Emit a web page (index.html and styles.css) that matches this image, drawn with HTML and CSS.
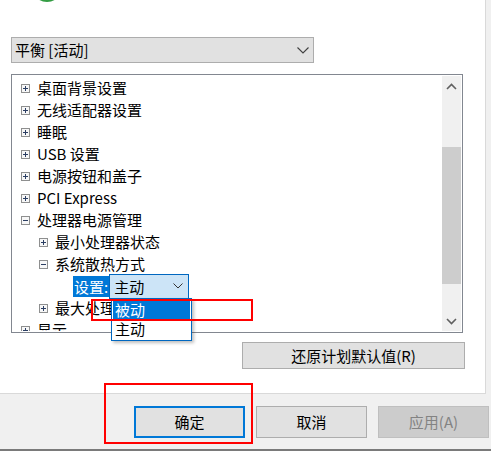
FILE: index.html
```html
<!DOCTYPE html>
<html>
<head>
<meta charset="utf-8">
<link rel="stylesheet" href="styles.css">
</head>
<body>
<div class="panel">
  <div class="header"><div class="logo"></div></div>
  <div class="select">
    <span>平衡 [活动]</span>
    <svg class="chev" width="12" height="7" viewBox="0 0 12 7"><path d="M0.5 0.5 L6 6 L11.5 0.5" fill="none" stroke="#404040" stroke-width="1.1"/></svg>
  </div>
  <div class="listbox">
    <div class="tree">
      <div class="row l1"><svg class="box" width="9" height="9" viewBox="0 0 9 9"><rect x="0.5" y="0.5" width="8" height="8" fill="#f7f7f7" stroke="#8e8f8f"/><path d="M2 4.5H7M4.5 2V7" stroke="#2b3e63"/></svg><span>桌面背景设置</span></div>
      <div class="row l1"><svg class="box" width="9" height="9" viewBox="0 0 9 9"><rect x="0.5" y="0.5" width="8" height="8" fill="#f7f7f7" stroke="#8e8f8f"/><path d="M2 4.5H7M4.5 2V7" stroke="#2b3e63"/></svg><span>无线适配器设置</span></div>
      <div class="row l1"><svg class="box" width="9" height="9" viewBox="0 0 9 9"><rect x="0.5" y="0.5" width="8" height="8" fill="#f7f7f7" stroke="#8e8f8f"/><path d="M2 4.5H7M4.5 2V7" stroke="#2b3e63"/></svg><span>睡眠</span></div>
      <div class="row l1"><svg class="box" width="9" height="9" viewBox="0 0 9 9"><rect x="0.5" y="0.5" width="8" height="8" fill="#f7f7f7" stroke="#8e8f8f"/><path d="M2 4.5H7M4.5 2V7" stroke="#2b3e63"/></svg><span>USB 设置</span></div>
      <div class="row l1"><svg class="box" width="9" height="9" viewBox="0 0 9 9"><rect x="0.5" y="0.5" width="8" height="8" fill="#f7f7f7" stroke="#8e8f8f"/><path d="M2 4.5H7M4.5 2V7" stroke="#2b3e63"/></svg><span>电源按钮和盖子</span></div>
      <div class="row l1"><svg class="box" width="9" height="9" viewBox="0 0 9 9"><rect x="0.5" y="0.5" width="8" height="8" fill="#f7f7f7" stroke="#8e8f8f"/><path d="M2 4.5H7M4.5 2V7" stroke="#2b3e63"/></svg><span>PCI Express</span></div>
      <div class="row l1"><svg class="box" width="9" height="9" viewBox="0 0 9 9"><rect x="0.5" y="0.5" width="8" height="8" fill="#f7f7f7" stroke="#8e8f8f"/><path d="M2 4.5H7" stroke="#2b3e63"/></svg><span>处理器电源管理</span></div>
      <div class="row l2"><svg class="box" width="9" height="9" viewBox="0 0 9 9"><rect x="0.5" y="0.5" width="8" height="8" fill="#f7f7f7" stroke="#8e8f8f"/><path d="M2 4.5H7M4.5 2V7" stroke="#2b3e63"/></svg><span>最小处理器状态</span></div>
      <div class="row l2"><svg class="box" width="9" height="9" viewBox="0 0 9 9"><rect x="0.5" y="0.5" width="8" height="8" fill="#f7f7f7" stroke="#8e8f8f"/><path d="M2 4.5H7" stroke="#2b3e63"/></svg><span>系统散热方式</span></div>
      <div class="row l3">
        <span class="hl">设置:</span>
        <div class="combo"><span>主动</span><svg class="chev2" width="10" height="6" viewBox="0 0 10 6"><path d="M0.5 0.5 L5 5 L9.5 0.5" fill="none" stroke="#333" stroke-width="1"/></svg></div>
      </div>
      <div class="row l2"><svg class="box" width="9" height="9" viewBox="0 0 9 9"><rect x="0.5" y="0.5" width="8" height="8" fill="#f7f7f7" stroke="#8e8f8f"/><path d="M2 4.5H7M4.5 2V7" stroke="#2b3e63"/></svg><span>最大处理器状态</span></div>
      <div class="row l1"><svg class="box" width="9" height="9" viewBox="0 0 9 9"><rect x="0.5" y="0.5" width="8" height="8" fill="#f7f7f7" stroke="#8e8f8f"/><path d="M2 4.5H7M4.5 2V7" stroke="#2b3e63"/></svg><span>显示</span></div>
    </div>
    <div class="scrollbar">
      <div class="sb-btn"><svg width="11" height="7" viewBox="0 0 11 7"><path d="M1 6 L5.5 1.5 L10 6" fill="none" stroke="#606060" stroke-width="1.6"/></svg></div>
      <div class="track"><div class="thumb"></div></div>
      <div class="sb-btn"><svg width="11" height="7" viewBox="0 0 11 7"><path d="M1 1 L5.5 5.5 L10 1" fill="none" stroke="#606060" stroke-width="1.6"/></svg></div>
    </div>
  </div>
  <div class="restore-row"><button class="btn restore">还原计划默认值(R)</button></div>
</div>
<div class="footer">
  <button class="btn primary">确定</button>
  <button class="btn">取消</button>
  <button class="btn disabled">应用(A)</button>
</div>

<div class="droplist">
  <div class="opt sel">被动</div>
  <div class="opt">主动</div>
</div>
<div class="mark mark1"></div>
<div class="mark mark2"></div>
</body>
</html>
```

FILE: styles.css
```css
* { box-sizing: border-box; }
html, body { margin: 0; padding: 0; }
body {
  width: 491px;
  height: 451px;
  overflow: hidden;
  background: #f0f0f0;
  font-family: "Noto Sans CJK SC", "Noto Sans", sans-serif;
  font-size: 15px;
  color: #000;
  position: relative;
}
.panel {
  width: 486px;
  height: 394px;
  background: #fff;
  border-right: 1px solid #d9d9d9;
  border-bottom: 1px solid #d9d9d9;
  padding-left: 11px;
}
.header {
  height: 37px;
  overflow: hidden;
}
.logo {
  width: 30px;
  height: 30px;
  border-radius: 50%;
  margin-left: 21px;
  margin-top: -28px;
  background: radial-gradient(circle at 50% 80%, #3aa54a, #157a25);
}
.select {
  width: 303px;
  height: 26px;
  background: #e1e1e1;
  border: 1px solid #adadad;
  display: flex;
  align-items: center;
  justify-content: space-between;
  padding: 0 4px 0 3px;
  line-height: 24px;
}
.chev { margin-right: 0; margin-top: 1px; }
.listbox {
  margin-top: 11px;
  width: 452px;
  height: 259px;
  border: 1px solid #828790;
  padding: 1px;
  display: flex;
  overflow: hidden;
}
.tree {
  flex: 1;
  padding-top: 1px;
  overflow: hidden;
}
.row {
  height: 22px;
  display: flex;
  align-items: center;
  line-height: 22px;
  white-space: nowrap;
}
.row .box { flex: none; margin-right: 7px; }
.l1 { padding-left: 8px; }
.l2 { padding-left: 26px; }
.l3 { padding-left: 60px; }
.hl {
  background: #0078d7;
  color: #fff;
  height: 21px;
  line-height: 21px;
  padding: 0 1px;
}
.combo {
  width: 80px;
  height: 25px;
  background: #cce4f7;
  border: 1px solid #0067c0;
  display: flex;
  align-items: center;
  justify-content: space-between;
  padding: 0 5px 0 4px;
  line-height: 23px;
}
.scrollbar {
  width: 19px;
  background: #f0f0f0;
  display: flex;
  flex-direction: column;
}
.sb-btn {
  height: 20px;
  display: flex;
  align-items: center;
  justify-content: center;
}
.track { flex: 1; }
.thumb {
  margin-top: 51px;
  height: 137px;
  background: #cdcdcd;
}
.restore-row {
  display: flex;
  justify-content: flex-end;
  padding-right: 20px;
  margin-top: 9px;
}
.btn {
  font-family: "Noto Sans CJK SC", "Noto Sans", sans-serif;
  font-size: 15px;
  color: #000;
  background: #e1e1e1;
  border: 1px solid #adadad;
  padding: 0;
  margin: 0;
  height: 32px;
  width: 111px;
  line-height: 28px;
}
.restore { width: 223px; height: 27px; line-height: 24px; }
.footer {
  height: 57px;
  display: flex;
  justify-content: flex-end;
  gap: 11px;
  padding: 12px 2px 0 0;
  border-bottom: 2px solid #7a7a7a;
}
.primary { border: 2px solid #0078d7; }
.disabled { background: #cccccc; border-color: #bfbfbf; color: #838383; }
.droplist {
  position: absolute;
  left: 111px;
  top: 298px;
  width: 81px;
  height: 43px;
  background: #fff;
  border: 1px solid #0067c0;
  box-shadow: 2px 2px 3px rgba(0,0,0,0.25);
  padding: 1px 1px;
}
.opt {
  height: 19px;
  line-height: 19px;
  padding-left: 2px;
}
.opt.sel { background: #0078d7; color: #fff; }
.mark {
  position: absolute;
  border: 2px solid #ff0000;
}
.mark1 { left: 91px; top: 299px; width: 162px; height: 22px; }
.mark2 { left: 104px; top: 383px; width: 149px; height: 61px; }
```
